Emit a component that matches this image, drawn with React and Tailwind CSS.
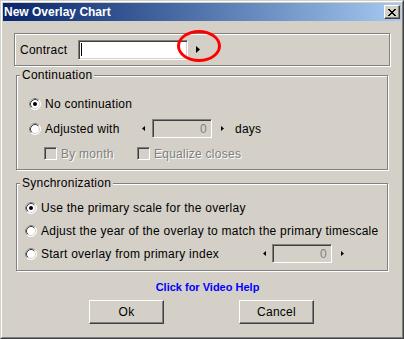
import React from 'react'

// classic 3d bevels
const sunken = "border border-t-[#808080] border-l-[#808080] border-r-white border-b-white shadow-[inset_1px_1px_0_#404040,inset_-1px_-1px_0_#d4d0c8]"
const raised = "border border-t-white border-l-white border-r-[#404040] border-b-[#404040] shadow-[inset_-1px_-1px_0_#808080]"
const etched = "border border-[#808080] shadow-[1px_1px_0_#fff,inset_1px_1px_0_#fff]"

function Radio({ checked }) {
  return (
    <svg width="12" height="12" viewBox="0 0 12 12" className="shrink-0">
      <circle cx="6" cy="6" r="5.5" fill="white" stroke="white" />
      <path d="M2.11 9.89A5.5 5.5 0 0 1 9.89 2.11" fill="none" stroke="#808080" />
      <circle cx="6" cy="6" r="4.5" fill="white" stroke="#d4d0c8" />
      <path d="M2.82 9.18A4.5 4.5 0 0 1 9.18 2.82" fill="none" stroke="#404040" />
      {checked && <circle cx="6" cy="6" r="2" fill="black" />}
    </svg>
  )
}

function Arrow({ dir = 'right', big = false }) {
  const w = big ? 4 : 3
  const h = big ? 7 : 5
  const d = dir === 'right' ? `M0 0L${w} ${h / 2}L0 ${h}z` : `M${w} 0L0 ${h / 2}L${w} ${h}z`
  return (
    <svg width={w} height={h} viewBox={`0 0 ${w} ${h}`} className="shrink-0">
      <path d={d} fill="black" />
    </svg>
  )
}

function Check({ label }) {
  return (
    <div className="flex items-center gap-[4px]">
      <div className={`w-[13px] h-[13px] bg-[#d4d0c8] ${sunken}`} />
      <span className="text-[#808080] [text-shadow:1px_1px_0_#fff]">{label}</span>
    </div>
  )
}

function NumBox() {
  return (
    <div className={`w-[60px] h-[19px] bg-[#d4d0c8] ${sunken} flex items-center justify-end pr-[4px] text-[#808080]`}>
      0
    </div>
  )
}

export default function App() {
  return (
    <div className="w-[404px] h-[339px] bg-[#d4d0c8] border border-t-[#d4d0c8] border-l-[#d4d0c8] border-r-[#404040] border-b-[#404040] font-['Liberation_Sans',Arial,sans-serif] text-[12px] leading-[14px] tracking-[0.25px] text-black select-none">
      <div className="h-full border border-t-white border-l-white border-r-[#808080] border-b-[#808080] p-px flex flex-col">
        {/* title bar */}
        <div className="h-[18px] flex items-center justify-between bg-linear-to-r from-[#0a246a] to-[#a6caf0]">
          <span className="pl-px text-white font-bold tracking-normal">New Overlay Chart</span>
          <div className={`w-[16px] h-[14px] mr-px bg-[#d4d0c8] ${raised} flex items-center justify-center`}>
            <svg width="8" height="7" viewBox="0 0 8 7">
              <path d="M0 0h2v1h-2zM6 0h2v1h-2zM1 1h2v1h-2zM5 1h2v1h-2zM2 2h4v1h-4zM3 3h2v1h-2zM2 4h4v1h-4zM1 5h2v1h-2zM5 5h2v1h-2zM0 6h2v1h-2zM6 6h2v1h-2z" fill="black" />
            </svg>
          </div>
        </div>

        {/* contract */}
        <div className={`mt-[12px] ml-[11px] w-[376px] h-[33px] ${etched} flex items-center pl-[5px]`}>
          <span className="w-[58px]">Contract</span>
          <div className={`w-[110px] h-[20px] bg-white ${sunken} flex items-center pl-[2px]`}>
            <span className="w-px h-[13px] bg-black" />
          </div>
          <div className="relative ml-[8px] flex items-center">
            <Arrow dir="right" big />
            <div className="absolute left-[-19px] top-[-16px] w-[44px] h-[32px] rounded-[50%] border-[3px] border-[#ff0000]" />
          </div>
        </div>

        {/* continuation */}
        <div className={`relative mt-[9px] ml-[13px] w-[372px] h-[95px] ${etched} pt-[15px]`}>
          <span className="absolute left-[3px] top-[-8px] px-[2px] bg-[#d4d0c8]">Continuation</span>
          <div className="h-[25px] flex items-center pl-[12px] gap-[4px]">
            <Radio checked />
            <span>No continuation</span>
          </div>
          <div className="h-[25px] flex items-center pl-[12px]">
            <div className="w-[111px] flex items-center gap-[4px]">
              <Radio />
              <span>Adjusted with</span>
            </div>
            <div className="ml-[2px]"><Arrow dir="left" /></div>
            <div className="ml-[7px]"><NumBox /></div>
            <div className="ml-[9px]"><Arrow dir="right" /></div>
            <span className="ml-[11px]">days</span>
          </div>
          <div className="h-[25px] flex items-center pl-[27px]">
            <div className="w-[93px]"><Check label="By month" /></div>
            <Check label="Equalize closes" />
          </div>
        </div>

        {/* synchronization */}
        <div className={`relative mt-[13px] ml-[13px] w-[372px] h-[88px] ${etched} pt-[12px]`}>
          <span className="absolute left-[3px] top-[-8px] px-[2px] bg-[#d4d0c8]">Synchronization</span>
          <div className="h-[23px] flex items-center pl-[8px] gap-[4px]">
            <Radio checked />
            <span>Use the primary scale for the overlay</span>
          </div>
          <div className="h-[23px] flex items-center pl-[8px] gap-[4px]">
            <Radio />
            <span>Adjust the year of the overlay to match the primary timescale</span>
          </div>
          <div className="h-[23px] flex items-center pl-[8px]">
            <div className="w-[238px] flex items-center gap-[4px]">
              <Radio />
              <span>Start overlay from primary index</span>
            </div>
            <Arrow dir="left" />
            <div className="ml-[6px]"><NumBox /></div>
            <div className="ml-[9px]"><Arrow dir="right" /></div>
          </div>
        </div>

        {/* help link */}
        <div className="mt-[9px] flex justify-center pl-[11px]">
          <span className="text-[#0000ff] font-bold text-[11px] leading-[14px] tracking-normal">Click for Video Help</span>
        </div>

        {/* buttons */}
        <div className="mt-[6px] flex pl-[86px] gap-[75px]">
          <button className={`w-[75px] h-[24px] bg-[#d4d0c8] ${raised}`}>Ok</button>
          <button className={`w-[75px] h-[24px] bg-[#d4d0c8] ${raised}`}>Cancel</button>
        </div>
      </div>
    </div>
  )
}
